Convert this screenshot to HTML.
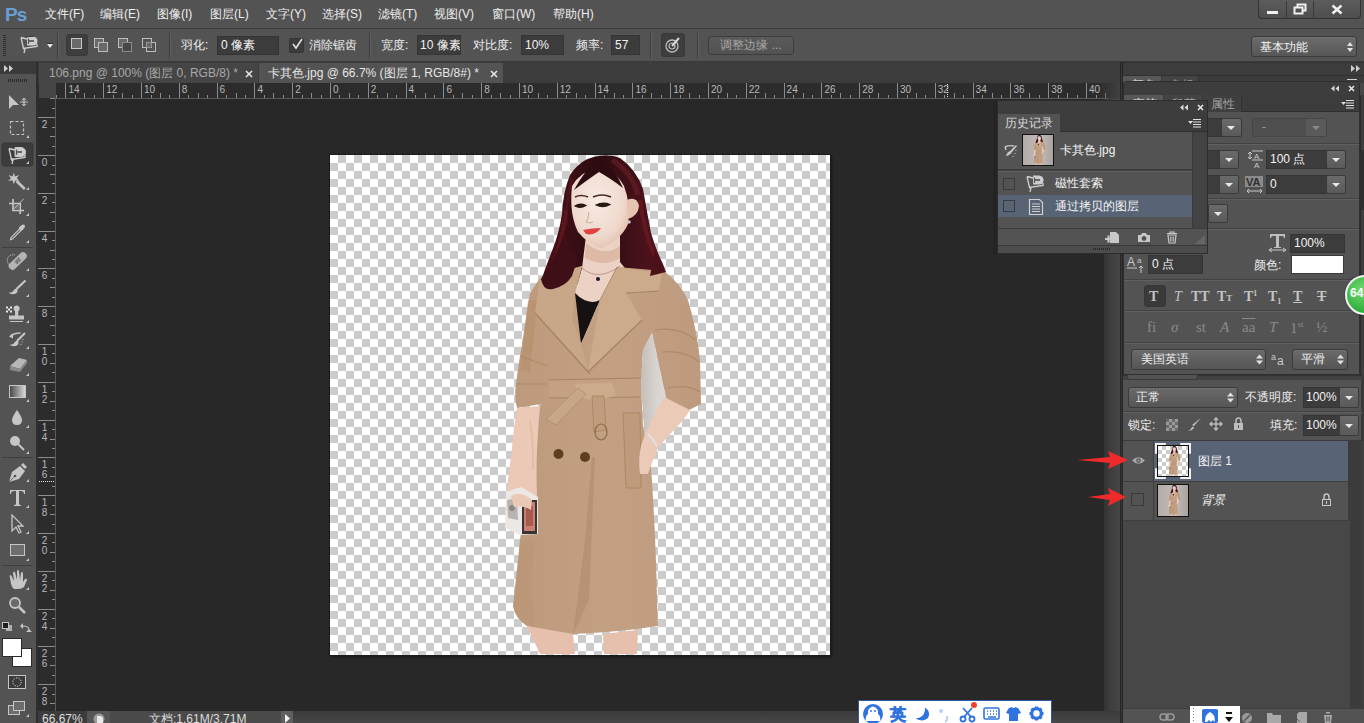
<!DOCTYPE html><html><head><meta charset="utf-8"><style>*{margin:0;padding:0;box-sizing:border-box}
html,body{width:1364px;height:723px;overflow:hidden;background:#282828;font-family:"Liberation Sans",sans-serif;color:#d8d8d8;font-size:12px;position:relative}
.a{position:absolute}
.mi{position:absolute;top:6px;font-size:12px;color:#eeeeee;white-space:nowrap}
.lbl{position:absolute;font-size:12px;color:#eeeeee;white-space:nowrap;line-height:16px}
.inp{position:absolute;background:#3c3c3c;border:1px solid #353535;color:#f2f2f2;font-size:12px;padding-left:3px;white-space:nowrap;overflow:hidden}
.vsep{position:absolute;width:2px;border-left:1px solid #3d3d3d;border-right:1px solid #606060}
.hsep{position:absolute;height:2px;border-top:1px solid #424242;border-bottom:1px solid #606060}
.tk{background:#8c8c8c}
.rl{font-size:10px;color:#b8b8b8;white-space:nowrap;line-height:11px}
.btn{position:absolute;background:linear-gradient(#6a6a6a,#5a5a5a);border:1px solid #3a3a3a;border-radius:2px}
.dd{position:absolute;background:linear-gradient(#6a6a6a,#555555);border:1px solid #3a3a3a;border-radius:3px;box-shadow:inset 0 1px 0 #707070}
.arr{position:absolute;width:0;height:0;border-left:4px solid transparent;border-right:4px solid transparent;border-top:4px solid #e8e8e8}
.checker{background:repeating-conic-gradient(#cccccc 0 25%,#ffffff 0 50%) 0 0/16px 16px}
.ic{position:absolute;overflow:visible}
</style></head><body>
<div class="a" style="left:0;top:0;width:1364px;height:28px;background:#535353">
  <div class="a" style="left:5px;top:4px;font-size:19px;font-weight:bold;color:#6a9fd6;letter-spacing:-1px">Ps</div>
  <div class="mi" style="left:45px">文件(F)</div>
  <div class="mi" style="left:100px">编辑(E)</div>
  <div class="mi" style="left:157px">图像(I)</div>
  <div class="mi" style="left:210px">图层(L)</div>
  <div class="mi" style="left:266px">文字(Y)</div>
  <div class="mi" style="left:322px">选择(S)</div>
  <div class="mi" style="left:378px">滤镜(T)</div>
  <div class="mi" style="left:434px">视图(V)</div>
  <div class="mi" style="left:492px">窗口(W)</div>
  <div class="mi" style="left:553px">帮助(H)</div>
  <div class="a" style="left:1258px;top:0;width:103px;height:19px;border:1px solid #333;border-top:none;border-radius:0 0 4px 4px;background:linear-gradient(#5c5c5c,#4e4e4e)"></div>
  <div class="a" style="left:1286px;top:1px;width:1px;height:17px;background:#3a3a3a"></div>
  <div class="a" style="left:1313px;top:1px;width:1px;height:17px;background:#3a3a3a"></div>
  <div class="a" style="left:1267px;top:11px;width:11px;height:3px;background:#f0f0f0"></div>
  <svg class="ic" style="left:1293px;top:3px" width="14" height="12"><rect x="4.5" y="1.5" width="8" height="6" fill="none" stroke="#f0f0f0" stroke-width="2"/><rect x="1.5" y="4.5" width="8" height="6" fill="#505050" stroke="#f0f0f0" stroke-width="2"/></svg>
  <svg class="ic" style="left:1331px;top:4px" width="12" height="11"><path d="M1.5 1.5L10.5 9.5M10.5 1.5L1.5 9.5" stroke="#f0f0f0" stroke-width="2.4"/></svg>
</div>
<div class="a" style="left:0;top:28px;width:1364px;height:1px;background:#3e3e3e"></div>

<div class="a" style="left:0;top:29px;width:1364px;height:33px;background:#535353">
  <div class="a" style="left:3px;top:6px;width:3px;height:21px;background:repeating-linear-gradient(#2e2e2e 0 1px,transparent 1px 2px)"></div>
  <svg class="ic" style="left:19px;top:6px" width="20" height="20" viewBox="19 35 20 20"><path d="M21 37.5 L27 39 M21 37.5 L23.5 48.5 L37 46.5 L37 44" fill="none" stroke="#cfcfcf" stroke-width="1.3"/><path d="M27 36.5 L33 36.5 Q37.5 37 37.5 41 Q37.5 45.5 33 45.5 L27 45.5 Z" fill="#cdcdcd"/><path d="M28 41 L34 41" stroke="#3a3a3a" stroke-width="1.4"/><path d="M28.5 38.5 L28.5 44" stroke="#555" stroke-width="1.2"/><path d="M26 37 L34 36" stroke="#2e2e2e" stroke-width="1"/><circle cx="24" cy="48.5" r="1" fill="#cfcfcf"/><path d="M25 49 L24 53" stroke="#cfcfcf" stroke-width="1.3"/></svg>
  <div class="a" style="left:47px;top:14px;width:6px;height:1px;background:#2e2e2e"></div><div class="arr" style="left:47px;top:15px;border-left-width:3px;border-right-width:3px;border-top-width:4px"></div>
  <div class="vsep" style="left:57px;top:4px;height:25px"></div>
  <div class="a" style="left:66px;top:5px;width:22px;height:22px;background:#3e3e3e;border-radius:3px;border:1px solid #393939"></div>
  <div class="a" style="left:71px;top:9px;width:11px;height:11px;border:1px solid #c8c8c8;background:#6a6a6a"></div>
  <svg class="ic" style="left:93px;top:8px" width="16" height="16"><rect x="1.5" y="1.5" width="9" height="9" fill="#6a6a6a" stroke="#bdbdbd"/><rect x="5.5" y="5.5" width="9" height="9" fill="#6a6a6a" stroke="#bdbdbd"/></svg>
  <svg class="ic" style="left:117px;top:8px" width="16" height="16"><rect x="1.5" y="1.5" width="9" height="9" fill="#6a6a6a" stroke="#bdbdbd"/><rect x="5.5" y="5.5" width="9" height="9" fill="#484848" stroke="#8a8a8a"/></svg>
  <svg class="ic" style="left:141px;top:8px" width="16" height="16"><rect x="1.5" y="1.5" width="9" height="9" fill="none" stroke="#bdbdbd"/><rect x="5.5" y="5.5" width="9" height="9" fill="none" stroke="#bdbdbd"/><rect x="5.5" y="5.5" width="5" height="5" fill="#6a6a6a"/></svg>
  <div class="vsep" style="left:169px;top:4px;height:25px"></div>
  <div class="lbl" style="left:181px;top:8px">羽化:</div>
  <div class="inp" style="left:217px;top:7px;width:62px;height:19px;line-height:17px">0 像素</div>
  <div class="a" style="left:289px;top:9px;width:15px;height:15px;background:#3c3c3c;border:1px solid #353535;border-radius:2px"></div>
  <svg class="ic" style="left:290px;top:8px" width="14" height="14"><path d="M3 7 L6 11 L12 2" fill="none" stroke="#e0e0e0" stroke-width="1.6"/></svg>
  <div class="lbl" style="left:309px;top:8px">消除锯齿</div>
  <div class="vsep" style="left:369px;top:4px;height:25px"></div>
  <div class="lbl" style="left:381px;top:8px">宽度:</div>
  <div class="inp" style="left:417px;top:6px;width:44px;height:20px;line-height:18px;padding-left:2px">10 像素</div>
  <div class="lbl" style="left:473px;top:8px">对比度:</div>
  <div class="inp" style="left:521px;top:6px;width:43px;height:20px;line-height:18px">10%</div>
  <div class="lbl" style="left:576px;top:8px">频率:</div>
  <div class="inp" style="left:611px;top:6px;width:29px;height:20px;line-height:18px">57</div>
  <div class="vsep" style="left:650px;top:4px;height:25px"></div>
  <div class="a" style="left:661px;top:4px;width:24px;height:24px;background:#3e3e3e;border-radius:3px;border:1px solid #393939"></div>
  <svg class="ic" style="left:664px;top:7px" width="18" height="18"><circle cx="8" cy="10" r="6" fill="none" stroke="#bdbdbd" stroke-width="1.3"/><circle cx="8" cy="10" r="3" fill="none" stroke="#bdbdbd" stroke-width="1.2"/><path d="M8 10 L15 2" stroke="#d8d8d8" stroke-width="2"/></svg>
  <div class="vsep" style="left:697px;top:4px;height:25px"></div>
  <div class="a" style="left:708px;top:7px;width:86px;height:19px;border:1px solid #3d3d3d;border-radius:3px;background:linear-gradient(#5a5a5a,#525252);color:#a6a6a6;font-size:12px;line-height:17px;text-align:center">调整边缘 ...</div>
  <div class="dd" style="left:1251px;top:7px;width:106px;height:21px;background:linear-gradient(#6c6c6c,#565656)"></div>
  <div class="lbl" style="left:1260px;top:10px;color:#f4f4f4">基本功能</div>
  <svg class="ic" style="left:1346px;top:12px" width="8" height="12"><path d="M1 5 L4 1 L7 5Z M1 7 L4 11 L7 7Z" fill="#e0e0e0"/></svg>
</div>
<div class="a" style="left:0;top:61px;width:1364px;height:1px;background:#3a3a3a"></div>

<div class="a" style="left:0;top:62px;width:36px;height:661px;background:#535353">
  <div class="a" style="left:0;top:0;width:36px;height:12px;background:#3a3a3a"></div>
  <svg class="ic" style="left:4px;top:3px" width="12" height="7"><path d="M0 0L4 3.5L0 7Z M5 0L9 3.5L5 7Z" fill="#cfcfcf"/></svg>
  <div class="a" style="left:8px;top:17px;width:19px;height:3px;background:repeating-linear-gradient(90deg,#2a2a2a 0 1px,transparent 1px 2px)"></div>
</div>
<div class="a" style="left:36px;top:62px;width:2px;height:661px;background:#2e2e2e"></div>
<svg class="a" style="left:0;top:62px" width="36" height="661" viewBox="0 62 36 661">
<rect x="2" y="143" width="31" height="23" rx="2" fill="#3c3c3c" stroke="#363636"/>
<g fill="#c6c6c6" stroke="none">
 <!-- corner triangles -->
 <path d="M26 138h3v-3z M26 164h3v-3z M26 190h3v-3z M26 216h3v-3z M26 243h3v-3z M26 271h3v-3z M26 297h3v-3z M26 323h3v-3z M26 349h3v-3z M26 376h3v-3z M26 402h3v-3z M26 428h3v-3z M26 454h3v-3z M26 482h3v-3z M26 508h3v-3z M26 534h3v-3z M26 561h3v-3z M26 590h3v-3z M26 717h3v-3z"/>
</g>
<g fill="#c6c6c6" stroke="#c6c6c6">
 <!-- move -->
 <path d="M9 95 L9 109 L13 105 L19 105 Z" stroke="none"/>
 <path d="M20 102 h8 M24 98 v8" stroke-width="1.2" fill="none"/>
 <path d="M22 100l2-2 2 2M22 104l2 2 2-2M18 102" fill="none" stroke-width="1"/>
 <!-- marquee -->
 <rect x="10.5" y="121.5" width="13" height="13" fill="none" stroke-dasharray="3 2" stroke-width="1.2"/>
 <!-- lasso -->
 <g transform="translate(-12 111)"><path d="M21 37.5 L27 39 M21 37.5 L23.5 48.5 L37 46.5 L37 44" fill="none" stroke="#cfcfcf" stroke-width="1.3"/><path d="M27 36.5 L33 36.5 Q37.5 37 37.5 41 Q37.5 45.5 33 45.5 L27 45.5 Z" fill="#cdcdcd"/><path d="M28 41 L34 41" stroke="#3a3a3a" stroke-width="1.4"/><path d="M28.5 38.5 L28.5 44" stroke="#555" stroke-width="1.2"/><circle cx="24" cy="48.5" r="1" fill="#cfcfcf"/><path d="M25 49 L24 53" stroke="#cfcfcf" stroke-width="1.3"/></g>
 <!-- wand -->
 <path d="M13.8 172.5 L15 176.5 L19 175 L16.8 178.2 L19.5 181 L15.5 180.2 L13.8 184 L12.4 180.2 L8.3 181 L11 178.2 L8.5 175 L12.6 176.5 Z" stroke="none"/>
 <path d="M16.5 181 L24.8 189" stroke-width="2.6" fill="none"/>
 <!-- crop -->
 <path d="M13 199 V210.5 H24 M9 203.5 H20.2 V214" fill="none" stroke-width="1.7"/>
 <rect x="14" y="204.5" width="5.5" height="5.5" fill="#6e6e6e" stroke="none"/>
 <path d="M14.4 208.6 L23.8 198.7" fill="none" stroke-width="0.9"/>
 <!-- eyedropper -->
 <path d="M10.5 239.6 L11 237.5 L19.5 229 L21 230.5 L12.5 239 Z" fill="none" stroke-width="1.1"/>
 <path d="M18.5 228 L21.5 231 L23 229.5 Q26 226.5 24.5 225 Q23 223.5 20 226.5 Z" stroke="none"/>
 <!-- separator -->
 <rect x="2" y="247" width="31" height="1" fill="#3e3e3e" stroke="none"/>
 <!-- healing -->
 <path d="M12.5 266 L23 256" stroke="#b4b4b4" stroke-width="7.5" stroke-linecap="round" fill="none"/>
 <path d="M15.5 263 L20 258.5" stroke="#8a8a8a" stroke-width="4" fill="none"/>
 <path d="M16 261h1M18 259h1M17 263h1M19 261h1" stroke="#555" stroke-width="1" fill="none"/>
 <path d="M10 266 Q6 262 8 257.5 Q10.5 254 15 255" fill="none" stroke="#d8d8d8" stroke-width="1" stroke-dasharray="1 1"/>
 <!-- brush -->
 <path d="M16.5 289 L25.5 280.5" stroke-width="2.2" fill="none"/>
 <path d="M8 292.5 Q12 293.5 14 290 Q15.5 288 17.5 289.5 Q18 292 16 293.5 Q12 295.5 8 292.5Z" stroke="none"/>
 <!-- stamp -->
 <circle cx="16.6" cy="308.5" r="3" stroke="none"/>
 <rect x="15" y="310" width="3.2" height="6" stroke="none"/>
 <rect x="9" y="315.5" width="15" height="4" stroke="none"/>
 <rect x="10" y="321" width="13" height="1" stroke="none"/>
 <path d="M6 306.5h2v2h-2zM10 306.5h2v2h-2zM8 308.5h2v2h-2zM6 310.5h2v2h-2zM10 310.5h2v2h-2z" stroke="none" fill="#e8e8e8"/>
 <!-- history brush -->
 <path d="M17 341 L25 333" stroke-width="2.2" fill="none"/>
 <path d="M9 344.5 Q13 345.5 15 342 Q16.5 340 18.5 341.5 Q19 344 17 345.5 Q13 347.5 9 344.5Z" stroke="none"/>
 <path d="M10.5 336 Q15 332.5 20.5 333" fill="none" stroke-width="1.6"/>
 <path d="M9 336.5 L13 333.5 L13 338.5 Z" stroke="none"/>
 <path d="M22.5 339.5h1M21.5 342h1M20.5 344.5h1" stroke-width="1" fill="none"/>
 <!-- eraser -->
 <path d="M10 366 L19 358 L27 360 L20 369 Z" stroke="none" fill="#b8b8b8"/>
 <path d="M10 366 L10 370 L20 372 L20 369 Z M20 369 L27 360 L27 363 L20 372Z" stroke="none" fill="#8a8a8a"/>
 <!-- gradient -->
 <defs><linearGradient id="gr" x1="0" x2="1"><stop offset="0" stop-color="#444"/><stop offset="1" stop-color="#ddd"/></linearGradient></defs>
 <rect x="9.5" y="385.5" width="16" height="12" fill="url(#gr)" stroke="#c6c6c6"/>
 <!-- blur drop -->
 <path d="M17 410 Q12 417 12 420 Q12 425 17 425 Q22 425 22 420 Q22 417 17 410Z" stroke="none"/>
 <!-- dodge -->
 <circle cx="15" cy="441" r="5" stroke="none"/>
 <path d="M18 444 L24 450" stroke-width="2" fill="none"/>
 <rect x="2" y="457" width="31" height="1" fill="#3e3e3e" stroke="none"/>
 <!-- pen -->
 <path d="M9 482 L12 472 L20 466 L25 471 L19 479 Z" stroke="none"/>
 <path d="M21 465 L23 463 L27 467 L25 469 Z" stroke="none"/>
 <circle cx="15" cy="476" r="1.3" fill="#535353" stroke="none"/>
 <path d="M9 482 L15 476" stroke="#535353" stroke-width="0.8"/>
 <!-- type -->
 <path d="M10 490 H25 V494 H24 Q24 491 21 491 H19 V504 Q19 505 21 505 V506 H14 V505 Q16 505 16 504 V491 H14 Q11 491 11 494 H10 Z" stroke="none"/>
 <!-- path selection -->
 <path d="M12 515 L12 531 L16 527 L19 533 L21 532 L18 526 L23 526 Z" fill="#535353" stroke-width="1.3"/>
 <!-- rect -->
 <rect x="10.5" y="544.5" width="14" height="11" fill="#6e6e6e" stroke="#c6c6c6"/>
 <rect x="2" y="565" width="31" height="1" fill="#3e3e3e" stroke="none"/>
 <!-- hand -->
 <path d="M10 578 Q9 575 11 575 L14 581 L13 573 Q13 571 15 572 L17 580 L17 571 Q18 569 19 571 L20 580 L21 573 Q22 571 23 573 L23 582 L25 579 Q27 578 27 580 L24 587 Q22 589 18 589 L14 589 Q12 588 11 584 Z" stroke="none"/>
 <!-- zoom -->
 <circle cx="15" cy="603" r="5" fill="#6a6a6a" stroke-width="1.8"/>
 <path d="M19 607 L25 613" stroke-width="2.5" fill="none"/>
 <!-- small swatches -->
 <rect x="6" y="625" width="6" height="6" fill="#b0b0b0" stroke="none"/>
 <rect x="2.5" y="622.5" width="6" height="6" fill="#1e1e1e" stroke="#c6c6c6"/>
 <path d="M20 626 L23 623 L23 629 Z M26 632 L29 629 L32 632 Z" stroke="none"/>
 <path d="M22.5 626 Q29 626 29 630" fill="none" stroke-width="1.1"/>
 <!-- colors -->
 <rect x="12.5" y="648.5" width="19" height="18" fill="#fff" stroke="#2a2a2a"/>
 <rect x="2.5" y="638.5" width="19" height="18" fill="#fff" stroke="#2a2a2a"/>
 <!-- quick mask -->
 <rect x="8.5" y="675.5" width="17" height="13" fill="#3a3a3a" stroke="#c6c6c6"/>
 <circle cx="17" cy="682" r="4.2" fill="none" stroke="#e0e0e0" stroke-dasharray="1.3 1.3"/>
 <!-- screen mode -->
 <rect x="8.5" y="705.5" width="11" height="9" fill="#6c6c6c" stroke="#c6c6c6"/>
 <rect x="13.5" y="701.5" width="11" height="9" fill="#6c6c6c" stroke="#c6c6c6"/>
</g>
</svg>

<div class="a" style="left:38px;top:62px;width:1082px;height:21px;background:#3c3c3c"></div>
<div class="a" style="left:39px;top:63px;width:219px;height:20px;background:#454545"></div>
<div class="lbl" style="left:49px;top:65px;color:#a8a8a8">106.png @ 100% (图层 0, RGB/8) *</div>
<svg class="ic" style="left:245px;top:70px" width="8" height="8"><path d="M1 1L7 7M7 1L1 7" stroke="#e8e8e8" stroke-width="1.5"/></svg>
<div class="a" style="left:259px;top:63px;width:244px;height:20px;background:#535353"></div>
<div class="lbl" style="left:268px;top:65px;color:#e6e6e6">卡其色.jpg @ 66.7% (图层 1, RGB/8#) *</div>
<svg class="ic" style="left:490px;top:70px" width="8" height="8"><path d="M1 1L7 7M7 1L1 7" stroke="#e8e8e8" stroke-width="1.5"/></svg>
<div class="a" style="left:56px;top:99px;width:1048px;height:612px;background:#282828"></div>
<div class="a" style="left:1104px;top:83px;width:16px;height:640px;background:linear-gradient(90deg,#333,#3e3e3e 40%,#454545)"></div>
<div class="a" style="left:1120px;top:62px;width:3px;height:661px;background:linear-gradient(90deg,#262626 0 1px,#383838 1px 2px,#262626 2px)"></div>
<div class="a checker" style="left:330px;top:155px;width:500px;height:500px;box-shadow:0 0 0 1px #1c1c1c,1px 1px 2px 1px rgba(0,0,0,.4)"></div>

<div class="a" style="left:1104px;top:711px;width:16px;height:12px;background:#585858"></div>
<svg class="a" style="left:330px;top:155px" width="500" height="500" viewBox="330 155 500 500">
<g id="figg"><defs>
 <linearGradient id="hairg" x1="0" y1="0" x2="1" y2="0"><stop offset="0" stop-color="#4a1018"/><stop offset="0.45" stop-color="#2c0c10"/><stop offset="1" stop-color="#561420"/></linearGradient>
 <linearGradient id="coatg" x1="0" y1="0" x2="1" y2="0"><stop offset="0" stop-color="#bd9a7c"/><stop offset="0.5" stop-color="#c3a083"/><stop offset="1" stop-color="#be9b7e"/></linearGradient>
 <radialGradient id="faceg" cx="0.45" cy="0.4" r="0.65"><stop offset="0" stop-color="#f8ebe4"/><stop offset="0.7" stop-color="#efd9cd"/><stop offset="1" stop-color="#e2c0ae"/></radialGradient>
</defs>
<!-- hair back -->
<path d="M599 156 Q581 158 570 175 Q563 192 562 214 Q559 234 552 251 Q546 266 542 278 Q541 288 548 290 L590 282 L640 272 L666 276 Q666 272 663 264 Q656 250 651 233 Q647 212 643 189 Q636 169 620 158 Q610 154 599 156Z" fill="url(#hairg)"/>
<path d="M566 210 Q562 245 548 276" fill="none" stroke="#6a1822" stroke-width="4" opacity="0.7"/>
<path d="M612 160 Q632 172 638 195" fill="none" stroke="#6e2028" stroke-width="5" opacity="0.55"/>
<path d="M572 178 Q566 200 566 225" fill="none" stroke="#5a1620" stroke-width="3" opacity="0.6"/>
<path d="M640 200 Q645 240 660 266" fill="none" stroke="#6e1a24" stroke-width="4" opacity="0.7"/>
<!-- gray shadow behind right arm -->

<!-- neck/chest -->
<path d="M586 236 L620 234 L620 262 L628 272 L600 302 L588 304 L575 293 L582 268 Z" fill="#ecd2c4"/>
<path d="M586 243 Q604 258 620 246 L620 258 Q604 268 585 258Z" fill="#ddb9a6"/>
<!-- black top -->
<path d="M575 293 Q588 306 600 300 L581 344 L572 320 Z" fill="#161212"/>
<!-- coat main body + arms -->
<path d="M540 278 L582 266 L575 293 L581 344 L600 300 L617 267 L664 271 Q680 283 688 300 Q697 330 700 360 L701 404 L687 411 L666 398 L652 333 L643 350 L641 384 L643 426 L651 466 Q656 540 657 600 L658 626 Q620 632 573 634 L570 636 Q545 632 527 626 Q515 618 513 606 Q518 560 520 540 Q528 480 536 440 L539 409 L541 404 L517 408 Q514 396 516 384 Q519 360 522 345 Q527 310 530 293 Z" fill="url(#coatg)"/>
<!-- gray shadow -->
<defs><linearGradient id="grayg" x1="0" y1="0" x2="1" y2="0"><stop offset="0" stop-color="#c4beb8"/><stop offset="0.5" stop-color="#d8d4d0"/><stop offset="1" stop-color="#e2dfdc"/></linearGradient></defs>
<path d="M652 333 L666 398 L672 432 L645 442 L641 384 L643 350 Z" fill="url(#grayg)"/>
<!-- shading on coat -->
<path d="M585 540 L592 457 L595 457 L589 600 L573 634 Z" fill="#a88664" opacity="0.45"/>
<path d="M520 540 Q518 580 513 606 Q515 618 527 626 L535 628 Q530 590 534 540 Z" fill="#b99370" opacity="0.4"/>
<path d="M528 300 Q524 340 520 370 L530 372 Q534 330 538 300Z" fill="#b48e69" opacity="0.5"/>
<!-- left lapel -->
<path d="M582 266 L540 278 L535 313 L588 371 L581 344 L572 320 L575 293 Z" fill="#c8a688"/>
<path d="M535 313 L590 374" fill="none" stroke="#a8835f" stroke-width="1.3"/>
<!-- right lapel -->
<path d="M617 267 L662 273 L659 291 L626 293 L642 320 L588 371 L600 300 Z" fill="#ccaa8c"/>
<path d="M642 320 L588 372 M626 293 L659 291" fill="none" stroke="#a8835f" stroke-width="1.2"/>
<path d="M617 267 L600 300" fill="none" stroke="#b89068" stroke-width="1"/>
<path d="M563 236 Q556 258 541 279 Q543 291 553 289 Q566 286 572 276 L578 258 Z" fill="#3e0f16"/>
<path d="M655 250 Q660 262 666 272 L650 276 Z" fill="#4a1218"/>
<!-- right arm folds -->
<path d="M655 330 Q680 326 695 340 M662 352 Q685 350 699 362 M668 388 Q688 384 700 392" fill="none" stroke="#a8835e" stroke-width="1.2" opacity="0.7"/>
<path d="M520 356 L547 366 M517 384 L547 384" fill="none" stroke="#a8835e" stroke-width="1.2" opacity="0.7"/>
<!-- belt -->
<path d="M549 380 L641 378 L641 397 L549 398 Z" fill="#c4a184"/>
<path d="M549 380 L641 378 M549 398 L641 397" stroke="#a8835e" stroke-width="1"/>
<path d="M575 384 L612 383 L616 396 L598 400 L578 398 Z" fill="#ccaa8c"/>
<path d="M586 394 L556 425 L546 419 L578 388 Z" fill="#c8a688" stroke="#a8835e" stroke-width="0.6"/>
<path d="M592 396 L604 396 L606 430 L594 432 Z" fill="#bf9c7e" stroke="#a8835e" stroke-width="0.8"/>
<ellipse cx="601" cy="432" rx="6" ry="8" fill="none" stroke="#8a6a4a" stroke-width="1.2"/>
<!-- pocket flap -->
<path d="M623 413 L640 413 L641 488 L626 488 Z" fill="#be9b7d" stroke="#a8835e" stroke-width="0.8"/>
<!-- buttons -->
<circle cx="558.5" cy="454" r="5" fill="#5e3e22"/>
<circle cx="585" cy="457" r="5" fill="#5e3e22"/>
<!-- left forearm & hand -->
<path d="M517 408 L540 406 Q538 430 537 450 Q536 475 537 495 Q535 508 530 514 L517 516 Q508 505 507 488 Q510 465 512 448 Q514 425 517 408 Z" fill="#ecc9b6"/>
<path d="M530 420 Q534 450 533 470" stroke="#dcb4a0" stroke-width="2" fill="none" opacity="0.6"/>
<!-- camera -->
<path d="M506 492 L521 487 L538 497 L538 534 L520 535 L505 528 Z" fill="#ebe8e6"/>
<path d="M507 500 L517 498 L518 520 L508 518 Z" fill="#b8b4b2"/>
<circle cx="512" cy="508" r="3" fill="#8a8684"/>
<rect x="522" y="500" width="15" height="34" fill="#3a3434"/>
<rect x="524" y="502" width="11" height="29" fill="#c88070"/>
<path d="M526 506 Q530 503 533 507 L533 526 L526 526Z" fill="#a85a50"/>
<path d="M511 496 Q520 490 532 500 L531 510 Q524 505 514 507 Z" fill="#ecc9b6"/>
<!-- right forearm -->
<path d="M664 397 L690 410 Q684 420 676 428 Q664 440 657 450 Q652 462 648 474 L640 474 Q638 458 641 446 Q646 430 654 416 Q660 404 664 397 Z" fill="#eccab8"/>
<path d="M648 434 Q654 440 657 446" stroke="#e0e0e4" stroke-width="2.4" fill="none"/>
<!-- legs -->
<path d="M527 626 L573 634 L575 654 L540 654 Z" fill="#e6c0ac"/>
<path d="M603 634 L638 630 L637 654 L604 654 Z" fill="#e6c0ac"/>
<!-- face -->
<path d="M572 186 Q580 172 598 167 Q616 171 624 186 Q631 204 628 224 Q621 240 601 248 Q588 244 578 232 Q569 214 572 186Z" fill="url(#faceg)"/>
<path d="M598 158 Q585 170 574 190 Q590 178 599 172 Q610 178 623 188 Q615 168 598 158Z" fill="#2c0c10"/>
<path d="M627 200 Q637 196 639 206 Q638 216 628 219 Z" fill="#e6c4b2"/>
<path d="M575 197 Q581 194 588 197 M593 197 Q602 193 611 197" stroke="#4a2a22" stroke-width="1.6" fill="none"/>
<path d="M575 206 Q580 202.5 586 205.5 Q580 209 575 206Z M596 205 Q603 201.5 610 204.5 Q603 208.5 596 205Z" stroke="#2a1810" stroke-width="1.2" fill="#2a1810"/>
<path d="M583 230 Q592 228 601 228 Q595 236 586 234 Z" fill="#e2413f"/>
<path d="M589 212 Q588 220 586 222 Q590 224 593 222" fill="none" stroke="#d0a898" stroke-width="1"/>
<circle cx="629" cy="222" r="1.8" fill="#c8c8d0"/>
<circle cx="598" cy="279" r="2" fill="#1a1a30"/>
<path d="M582 268 Q598 282 620 266" fill="none" stroke="#a07070" stroke-width="0.6"/>
</g></svg>

<div class="a" style="left:1123px;top:62px;width:241px;height:661px;background:#474747"></div>
<div class="a" style="left:1123px;top:62px;width:241px;height:13px;background:#3c3c3c;border-top:1px solid #333"></div>
<svg class="ic" style="left:1351px;top:65px" width="10" height="7"><path d="M0 0L4 3.5L0 7Z M5 0L9 3.5L5 7Z" fill="#d0d0d0"/></svg>
<div class="a" style="left:1123px;top:75px;width:241px;height:8px;background:#3c3c3c"></div>
<div class="a" style="left:1123px;top:75px;width:241px;height:1px;background:#303030"></div>
<div class="a" style="left:1123px;top:76px;width:38px;height:7px;background:#585858;overflow:hidden"><div class="lbl" style="left:9px;top:1px;color:#e0e0e0">颜色</div></div>
<div class="a" style="left:1162px;top:76px;width:37px;height:7px;background:#444;overflow:hidden;border-right:1px solid #333"><div class="lbl" style="left:8px;top:1px;color:#a8a8a8">色板</div></div>
<div class="a" style="left:1347px;top:79px;width:10px;height:1px;background:#d0d0d0"></div>
<!-- character panel -->
<div class="a" style="left:1123px;top:81px;width:237px;height:294px;background:#535353;border:1px solid #2e2e2e;border-radius:3px 3px 0 0;overflow:hidden">
  <div class="a" style="left:0;top:0;width:236px;height:13px;background:#3d3d3d"></div>
  <svg class="ic" style="left:207px;top:3px" width="8" height="7"><path d="M3.5 0.5L0 3.5L3.5 6.5Z M8 0.5L4.5 3.5L8 6.5Z" fill="#d8d8d8"/></svg>
  <svg class="ic" style="left:224px;top:3px" width="7" height="7"><path d="M1 1L6 6M6 1L1 6" stroke="#e8e8e8" stroke-width="1.5"/></svg>
  <div class="a" style="left:0;top:13px;width:236px;height:17px;background:#3c3c3c;border-bottom:1px solid #2e2e2e"></div>
  <div class="a" style="left:0;top:13px;width:39px;height:17px;background:#585858"></div>
  <div class="a" style="left:40px;top:13px;width:38px;height:17px;background:#444"></div>
  <div class="a" style="left:79px;top:13px;width:39px;height:17px;background:#3f3f3f;border-right:1px solid #333"></div>
  <div class="lbl" style="left:9px;top:14px;color:#e6e6e6">字符</div>
  <div class="lbl" style="left:48px;top:14px;color:#a8a8a8">段落</div>
  <div class="lbl" style="left:87px;top:14px;color:#a2a2a2">属性</div>
  <svg class="ic" style="left:217px;top:17px" width="14" height="10"><path d="M0 3h5l-2.5 3z" fill="#e0e0e0"/><path d="M5 1.5h8M5 4h8M5 6.5h8M5 9h8" stroke="#e0e0e0" stroke-width="1"/></svg>
</div>
<div class="a" style="left:1124px;top:112px;width:235px;height:263px">
  <!-- row1 -->
  <div class="inp" style="left:50px;top:6px;width:48px;height:19px"></div>
  <div class="btn" style="left:97px;top:6px;width:21px;height:19px"></div><div class="arr" style="left:103px;top:14px"></div>
  <div class="a" style="left:128px;top:6px;width:75px;height:19px;background:#4e4e4e;border:1px solid #464646;border-radius:2px"></div>
  <div class="a" style="left:182px;top:7px;width:20px;height:17px;background:#5a5a5a"></div>
  <div class="a" style="left:138px;top:15px;width:4px;height:1px;background:#8a8a8a"></div>
  <div class="arr" style="left:188px;top:14px;border-top-color:#8a8a8a"></div>
  <div class="hsep" style="left:0;top:31px;width:235px"></div>
  <!-- row2 -->
  <div class="inp" style="left:50px;top:38px;width:46px;height:19px"></div>
  <div class="btn" style="left:95px;top:38px;width:20px;height:19px"></div><div class="arr" style="left:101px;top:46px"></div>
  <svg class="ic" style="left:122px;top:38px" width="18" height="20"><path d="M2 4l2-2 2 2M2 7l2 2 2-2M4 2v7" stroke="#c8c8c8" fill="none"/><path d="M6 1h11M6 10h11" stroke="#c8c8c8"/><text x="8" y="9" font-size="8" fill="#c8c8c8" font-family="Liberation Sans">A</text><text x="8" y="18" font-size="8" fill="#c8c8c8" font-family="Liberation Sans">A</text></svg>
  <div class="inp" style="left:142px;top:38px;width:62px;height:19px;line-height:17px;padding-left:3px">100 点</div>
  <div class="btn" style="left:202px;top:38px;width:20px;height:19px"></div><div class="arr" style="left:208px;top:46px"></div>
  <!-- row3 -->
  <div class="inp" style="left:50px;top:63px;width:46px;height:19px"></div>
  <div class="btn" style="left:95px;top:63px;width:20px;height:19px"></div><div class="arr" style="left:101px;top:71px"></div>
  <svg class="ic" style="left:121px;top:63px" width="19" height="20"><rect x="0" y="1" width="18" height="11" fill="#8a8a8a"/><text x="1" y="11" font-size="11" font-weight="bold" fill="#2e2e2e" font-family="Liberation Sans">VA</text><path d="M2 16h15M2 16l2-2M2 16l2 2M17 16l-2-2M17 16l-2 2" stroke="#c8c8c8" fill="none"/></svg>
  <div class="inp" style="left:142px;top:63px;width:62px;height:19px;line-height:17px;padding-left:3px">0</div>
  <div class="btn" style="left:202px;top:63px;width:20px;height:19px"></div><div class="arr" style="left:208px;top:71px"></div>
  <div class="hsep" style="left:0;top:86px;width:235px"></div>
  <!-- row4 -->
  <div class="btn" style="left:84px;top:92px;width:20px;height:19px"></div><div class="arr" style="left:90px;top:100px"></div>
  <div class="hsep" style="left:0;top:116px;width:235px"></div>
  <!-- row5 -->
  <svg class="ic" style="left:143px;top:120px" width="22" height="20"><path d="M3 2h15v4h-1q0-2-2-2h-3v11h2v1H7v-1h2V4H6q-2 0-2 2H3z" fill="#bdbdbd"/><path d="M2 18h17M2 18l3-2M2 18l3 2M19 18l-3-2M19 18l-3 2" stroke="#c8c8c8" fill="none"/></svg>
  <div class="inp" style="left:166px;top:122px;width:55px;height:19px;line-height:17px;padding-left:3px">100%</div>
  <!-- row6 -->
  <svg class="ic" style="left:3px;top:143px" width="20" height="20"><text x="0" y="11" font-size="12" fill="#c8c8c8" font-family="Liberation Sans">A</text><text x="10" y="8" font-size="8" fill="#c8c8c8" font-family="Liberation Sans">a</text><path d="M0 13h10M14 11v7M12 13l2-2 2 2" stroke="#c8c8c8" fill="none"/></svg>
  <div class="inp" style="left:24px;top:143px;width:55px;height:19px;line-height:17px;padding-left:3px">0 点</div>
  <div class="lbl" style="left:130px;top:145px">颜色:</div>
  <div class="a" style="left:167px;top:143px;width:53px;height:19px;background:#fff;border:1px solid #3a3a3a"></div>
  <div class="hsep" style="left:0;top:167px;width:235px"></div>
  <!-- row7 -->
  <div class="a" style="left:20px;top:173px;width:22px;height:22px;background:#3a3a3a;border:1px solid #363636;border-radius:3px"></div>
</div>
<div class="hsep" style="left:1124px;top:310px;width:235px"></div>
<div class="a" style="left:1124px;top:286px;width:235px;height:20px;font-family:'Liberation Serif',serif;font-weight:bold;font-size:14px;color:#c4c4c4">
  <div class="a" style="left:25px;top:3px">T</div>
  <div class="a" style="left:50px;top:3px;font-style:italic;font-weight:normal">T</div>
  <div class="a" style="left:67px;top:3px">TT</div>
  <div class="a" style="left:93px;top:3px">T<span style="font-size:9px">T</span></div>
  <div class="a" style="left:120px;top:3px">T<span style="font-size:8px;vertical-align:5px">1</span></div>
  <div class="a" style="left:144px;top:3px">T<span style="font-size:8px;vertical-align:-3px">1</span></div>
  <div class="a" style="left:169px;top:3px;text-decoration:underline">T</div>
  <div class="a" style="left:193px;top:3px;text-decoration:line-through">T</div>
</div>
<div class="a" style="left:1124px;top:317px;width:235px;height:20px;font-family:'Liberation Serif',serif;font-size:15px;color:#8a8a8a">
  <div class="a" style="left:23px;top:2px">fi</div>
  <div class="a" style="left:47px;top:2px;font-style:italic">σ</div>
  <div class="a" style="left:72px;top:2px">st</div>
  <div class="a" style="left:96px;top:2px;font-style:italic">A</div>
  <div class="a" style="left:118px;top:2px;text-decoration:overline">aa</div>
  <div class="a" style="left:145px;top:2px;font-style:italic">T</div>
  <div class="a" style="left:166px;top:2px">1<span style="font-size:9px;vertical-align:6px">st</span></div>
  <div class="a" style="left:192px;top:2px">½</div>
</div>
<div class="a" style="left:1124px;top:343px;width:235px;height:32px">
  <div class="hsep" style="left:0;top:-1px;width:235px"></div>
  <div class="dd" style="left:7px;top:6px;width:135px;height:21px"></div>
  <div class="lbl" style="left:17px;top:8px">美国英语</div>
  <svg class="ic" style="left:132px;top:11px" width="7" height="11"><path d="M0 4.5L3.5 0.5L7 4.5Z M0 6.5L3.5 10.5L7 6.5Z" fill="#e0e0e0"/></svg>
  <svg class="ic" style="left:147px;top:8px" width="16" height="16"><text x="0" y="9" font-size="9" fill="#c8c8c8" font-family="Liberation Sans">a</text><text x="6" y="14" font-size="12" fill="#c8c8c8" font-family="Liberation Sans">a</text></svg>
  <div class="dd" style="left:168px;top:6px;width:56px;height:21px"></div>
  <div class="lbl" style="left:177px;top:8px">平滑</div>
  <svg class="ic" style="left:213px;top:11px" width="7" height="11"><path d="M0 4.5L3.5 0.5L7 4.5Z M0 6.5L3.5 10.5L7 6.5Z" fill="#e0e0e0"/></svg>
</div>
<!-- layers panel (behind) -->
<div class="a" style="left:1123px;top:375px;width:241px;height:8px;background:#424242;border-top:1px solid #333"></div>
<div class="a" style="left:1127px;top:375px;width:71px;height:5px;background:#535353;border:1px solid #3a3a3a;border-top:none;border-radius:0 0 3px 3px"></div>
<div class="a" style="left:1123px;top:380px;width:239px;height:329px;background:#535353;border-right:1px solid #3a3a3a"></div>
<div class="a" style="left:1348px;top:441px;width:16px;height:267px;background:linear-gradient(90deg,#3b3b3b 70%,#424242)"></div><div class="a" style="left:1362px;top:375px;width:2px;height:66px;background:#3a3a3a"></div>
<div class="dd" style="left:1128px;top:387px;width:110px;height:21px"></div>
<div class="lbl" style="left:1136px;top:389px">正常</div>
<svg class="ic" style="left:1227px;top:392px" width="7" height="11"><path d="M0 4.5L3.5 0.5L7 4.5Z M0 6.5L3.5 10.5L7 6.5Z" fill="#e0e0e0"/></svg>
<div class="lbl" style="left:1245px;top:389px">不透明度:</div>
<div class="inp" style="left:1303px;top:387px;width:37px;height:21px;line-height:19px;padding-left:2px">100%</div>
<div class="btn" style="left:1339px;top:387px;width:20px;height:21px"></div><div class="arr" style="left:1345px;top:396px"></div>
<div class="hsep" style="left:1123px;top:411px;width:239px"></div>
<div class="lbl" style="left:1128px;top:417px">锁定:</div>
<svg class="ic" style="left:1166px;top:419px" width="12" height="12"><rect x="0" y="0" width="12" height="12" fill="#9a9a9a"/><path d="M0 0h3v3H0zM6 0h3v3H6zM3 3h3v3H3zM9 3h3v3H9zM0 6h3v3H0zM6 6h3v3H6zM3 9h3v3H3zM9 9h3v3H9z" fill="#6a6a6a"/></svg>
<svg class="ic" style="left:1186px;top:417px" width="16" height="15"><path d="M15 1L8 9L6 8Z" fill="#bdbdbd"/><path d="M1 14Q4 14 6 10Q8 9 8 11Q6 14 1 14Z" fill="#bdbdbd"/></svg>
<svg class="ic" style="left:1209px;top:417px" width="14" height="14"><path d="M7 1v12M1 7h12M5 3l2-2 2 2M5 11l2 2 2-2M3 5L1 7l2 2M11 5l2 2-2 2" stroke="#bdbdbd" stroke-width="1.3" fill="none"/></svg>
<svg class="ic" style="left:1233px;top:417px" width="11" height="14"><path d="M3 6V4Q3 1 5.5 1Q8 1 8 4V6" stroke="#bdbdbd" stroke-width="1.5" fill="none"/><rect x="1" y="6" width="9" height="7" fill="#bdbdbd"/><rect x="5" y="8" width="1" height="3" fill="#535353"/></svg>
<div class="lbl" style="left:1270px;top:417px">填充:</div>
<div class="inp" style="left:1303px;top:415px;width:37px;height:21px;line-height:19px;padding-left:2px">100%</div>
<div class="btn" style="left:1339px;top:415px;width:20px;height:21px"></div><div class="arr" style="left:1345px;top:424px"></div>
<div class="a" style="left:1123px;top:440px;width:239px;height:1px;background:#3c3c3c"></div>
<!-- layer 1 -->
<div class="a" style="left:1123px;top:441px;width:31px;height:40px;background:#535353;border-right:1px solid #3e3e3e"></div>
<div class="a" style="left:1154px;top:441px;width:194px;height:40px;background:#586475"></div>
<svg class="ic" style="left:1131px;top:456px" width="15" height="9"><path d="M1 4.5Q7.5 -2 14 4.5Q7.5 11 1 4.5Z" fill="#a8a8a8"/><circle cx="7.5" cy="4.5" r="2.2" fill="#535353"/><circle cx="7.5" cy="4.5" r="1" fill="#a8a8a8"/></svg>
<div class="a" style="left:1155px;top:443px;width:36px;height:36px;border:2px solid #f0f0f0;clip-path:polygon(0 0,30% 0,30% 8%,70% 8%,70% 0,100% 0,100% 30%,92% 30%,92% 70%,100% 70%,100% 100%,70% 100%,70% 92%,30% 92%,30% 100%,0 100%,0 70%,8% 70%,8% 30%,0 30%)"></div>
<div class="a" style="left:1157px;top:445px;width:32px;height:32px;background:#111;padding:1px"><div class="checker" style="width:30px;height:30px;background-size:8px 8px"></div></div>
<svg class="ic" style="left:1158px;top:446px" width="30" height="30" viewBox="330 155 500 500"><use href="#figg"/></svg>
<div class="lbl" style="left:1198px;top:453px;color:#f4f4f4">图层 1</div>
<div class="a" style="left:1123px;top:481px;width:227px;height:1px;background:#3e3e3e"></div>
<!-- background layer -->
<div class="a" style="left:1154px;top:482px;width:194px;height:38px;background:#535353"></div>
<div class="a" style="left:1123px;top:482px;width:31px;height:38px;background:#535353;border-right:1px solid #3e3e3e"></div>
<div class="a" style="left:1131px;top:493px;width:13px;height:13px;border:1px solid #3a3a3a"></div>
<div class="a" style="left:1157px;top:484px;width:32px;height:33px;background:linear-gradient(90deg,#b4aca8,#c2bab6 60%,#aaa29e);border:1px solid #111;overflow:hidden">
  <svg width="30" height="31" viewBox="330 155 500 500" preserveAspectRatio="none"><use href="#figg"/></svg>
</div>
<div class="lbl" style="left:1201px;top:492px;font-style:italic;color:#f4f4f4;font-size:12px">背景</div>
<svg class="ic" style="left:1321px;top:493px" width="11" height="14"><path d="M3 6V4Q3 1 5.5 1Q8 1 8 4V6" stroke="#c8c8c8" stroke-width="1.4" fill="none"/><rect x="1.5" y="6.5" width="8" height="6" fill="none" stroke="#c8c8c8"/><rect x="5" y="8" width="1" height="3" fill="#c8c8c8"/></svg>
<div class="a" style="left:1123px;top:520px;width:227px;height:1px;background:#3e3e3e"></div>
<div class="a" style="left:1123px;top:521px;width:227px;height:188px;background:#474747"></div>
<!-- layers footer -->
<div class="a" style="left:1123px;top:708px;width:241px;height:15px;background:#535353;border-top:1px solid #3c3c3c"></div>
<svg class="ic" style="left:1159px;top:713px" width="16" height="8"><rect x="1" y="1" width="8" height="6" rx="3" fill="none" stroke="#9a9a9a" stroke-width="1.5"/><rect x="7" y="1" width="8" height="6" rx="3" fill="none" stroke="#9a9a9a" stroke-width="1.5"/></svg>
<svg class="ic" style="left:1241px;top:712px" width="12" height="11"><circle cx="6" cy="6" r="5" fill="#9a9a9a"/><path d="M3 9L9 3" stroke="#535353" stroke-width="1.5"/></svg>
<svg class="ic" style="left:1267px;top:712px" width="14" height="11"><path d="M0 1h5l1 2h8v8H0z" fill="#a8a8a8"/></svg>
<svg class="ic" style="left:1296px;top:711px" width="12" height="12"><path d="M3 1h8v11H1V3z" fill="#a8a8a8"/><path d="M1 8l3 3" stroke="#535353"/></svg>
<svg class="ic" style="left:1322px;top:711px" width="12" height="12"><path d="M1 2.5h10M4 2.5V1h4v1.5M2 4h8l-1 8H3z" fill="#a8a8a8"/><path d="M4.5 5.5v5M6 5.5v5M7.5 5.5v5" stroke="#535353" stroke-width="0.8"/></svg>
<div class="a" style="left:1360px;top:95px;width:4px;height:280px;background:#3e3e3e;border-left:1px solid #2c2c2c"></div>
<div class="a" style="left:1361px;top:150px;width:3px;height:60px;background:#2e2e2e"></div>
<!-- green circle -->
<div class="a" style="left:1345px;top:275px;width:40px;height:40px;border-radius:50%;background:radial-gradient(circle at 40% 35%,#6fd86f,#2fae3a 70%);border:2px solid #f4f4f4;box-shadow:0 0 2px rgba(0,0,0,.5)"></div>
<div class="a" style="left:1350px;top:286px;font-size:12px;font-weight:bold;color:#fff">64</div>

<div class="a" style="left:38px;top:83px;width:1082px;height:15px;background:#2c2c2c;overflow:hidden"><div class="a" style="left:1px;top:0;width:17px;height:15px;background:#464646"></div><div class="a tk" style="left:18.0px;top:12px;width:1px;height:3px"></div><div class="a tk" style="left:27.4px;top:0;width:1px;height:15px"></div><div class="a rl" style="left:30.4px;top:1px">14</div><div class="a tk" style="left:36.9px;top:12px;width:1px;height:3px"></div><div class="a tk" style="left:46.3px;top:10px;width:1px;height:5px"></div><div class="a tk" style="left:55.8px;top:12px;width:1px;height:3px"></div><div class="a tk" style="left:65.2px;top:0;width:1px;height:15px"></div><div class="a rl" style="left:68.2px;top:1px">12</div><div class="a tk" style="left:74.7px;top:12px;width:1px;height:3px"></div><div class="a tk" style="left:84.1px;top:10px;width:1px;height:5px"></div><div class="a tk" style="left:93.6px;top:12px;width:1px;height:3px"></div><div class="a tk" style="left:103.0px;top:0;width:1px;height:15px"></div><div class="a rl" style="left:106.0px;top:1px">10</div><div class="a tk" style="left:112.5px;top:12px;width:1px;height:3px"></div><div class="a tk" style="left:121.9px;top:10px;width:1px;height:5px"></div><div class="a tk" style="left:131.3px;top:12px;width:1px;height:3px"></div><div class="a tk" style="left:140.8px;top:0;width:1px;height:15px"></div><div class="a rl" style="left:143.8px;top:1px">8</div><div class="a tk" style="left:150.2px;top:12px;width:1px;height:3px"></div><div class="a tk" style="left:159.7px;top:10px;width:1px;height:5px"></div><div class="a tk" style="left:169.2px;top:12px;width:1px;height:3px"></div><div class="a tk" style="left:178.6px;top:0;width:1px;height:15px"></div><div class="a rl" style="left:181.6px;top:1px">6</div><div class="a tk" style="left:188.1px;top:12px;width:1px;height:3px"></div><div class="a tk" style="left:197.5px;top:10px;width:1px;height:5px"></div><div class="a tk" style="left:207.0px;top:12px;width:1px;height:3px"></div><div class="a tk" style="left:216.4px;top:0;width:1px;height:15px"></div><div class="a rl" style="left:219.4px;top:1px">4</div><div class="a tk" style="left:225.8px;top:12px;width:1px;height:3px"></div><div class="a tk" style="left:235.3px;top:10px;width:1px;height:5px"></div><div class="a tk" style="left:244.8px;top:12px;width:1px;height:3px"></div><div class="a tk" style="left:254.2px;top:0;width:1px;height:15px"></div><div class="a rl" style="left:257.2px;top:1px">2</div><div class="a tk" style="left:263.6px;top:12px;width:1px;height:3px"></div><div class="a tk" style="left:273.1px;top:10px;width:1px;height:5px"></div><div class="a tk" style="left:282.6px;top:12px;width:1px;height:3px"></div><div class="a tk" style="left:292.0px;top:0;width:1px;height:15px"></div><div class="a rl" style="left:295.0px;top:1px">0</div><div class="a tk" style="left:301.4px;top:12px;width:1px;height:3px"></div><div class="a tk" style="left:310.9px;top:10px;width:1px;height:5px"></div><div class="a tk" style="left:320.4px;top:12px;width:1px;height:3px"></div><div class="a tk" style="left:329.8px;top:0;width:1px;height:15px"></div><div class="a rl" style="left:332.8px;top:1px">2</div><div class="a tk" style="left:339.2px;top:12px;width:1px;height:3px"></div><div class="a tk" style="left:348.7px;top:10px;width:1px;height:5px"></div><div class="a tk" style="left:358.2px;top:12px;width:1px;height:3px"></div><div class="a tk" style="left:367.6px;top:0;width:1px;height:15px"></div><div class="a rl" style="left:370.6px;top:1px">4</div><div class="a tk" style="left:377.1px;top:12px;width:1px;height:3px"></div><div class="a tk" style="left:386.5px;top:10px;width:1px;height:5px"></div><div class="a tk" style="left:396.0px;top:12px;width:1px;height:3px"></div><div class="a tk" style="left:405.4px;top:0;width:1px;height:15px"></div><div class="a rl" style="left:408.4px;top:1px">6</div><div class="a tk" style="left:414.8px;top:12px;width:1px;height:3px"></div><div class="a tk" style="left:424.3px;top:10px;width:1px;height:5px"></div><div class="a tk" style="left:433.8px;top:12px;width:1px;height:3px"></div><div class="a tk" style="left:443.2px;top:0;width:1px;height:15px"></div><div class="a rl" style="left:446.2px;top:1px">8</div><div class="a tk" style="left:452.6px;top:12px;width:1px;height:3px"></div><div class="a tk" style="left:462.1px;top:10px;width:1px;height:5px"></div><div class="a tk" style="left:471.6px;top:12px;width:1px;height:3px"></div><div class="a tk" style="left:481.0px;top:0;width:1px;height:15px"></div><div class="a rl" style="left:484.0px;top:1px">10</div><div class="a tk" style="left:490.4px;top:12px;width:1px;height:3px"></div><div class="a tk" style="left:499.9px;top:10px;width:1px;height:5px"></div><div class="a tk" style="left:509.4px;top:12px;width:1px;height:3px"></div><div class="a tk" style="left:518.8px;top:0;width:1px;height:15px"></div><div class="a rl" style="left:521.8px;top:1px">12</div><div class="a tk" style="left:528.2px;top:12px;width:1px;height:3px"></div><div class="a tk" style="left:537.7px;top:10px;width:1px;height:5px"></div><div class="a tk" style="left:547.1px;top:12px;width:1px;height:3px"></div><div class="a tk" style="left:556.6px;top:0;width:1px;height:15px"></div><div class="a rl" style="left:559.6px;top:1px">14</div><div class="a tk" style="left:566.0px;top:12px;width:1px;height:3px"></div><div class="a tk" style="left:575.5px;top:10px;width:1px;height:5px"></div><div class="a tk" style="left:584.9px;top:12px;width:1px;height:3px"></div><div class="a tk" style="left:594.4px;top:0;width:1px;height:15px"></div><div class="a rl" style="left:597.4px;top:1px">16</div><div class="a tk" style="left:603.9px;top:12px;width:1px;height:3px"></div><div class="a tk" style="left:613.3px;top:10px;width:1px;height:5px"></div><div class="a tk" style="left:622.8px;top:12px;width:1px;height:3px"></div><div class="a tk" style="left:632.2px;top:0;width:1px;height:15px"></div><div class="a rl" style="left:635.2px;top:1px">18</div><div class="a tk" style="left:641.7px;top:12px;width:1px;height:3px"></div><div class="a tk" style="left:651.1px;top:10px;width:1px;height:5px"></div><div class="a tk" style="left:660.6px;top:12px;width:1px;height:3px"></div><div class="a tk" style="left:670.0px;top:0;width:1px;height:15px"></div><div class="a rl" style="left:673.0px;top:1px">20</div><div class="a tk" style="left:679.5px;top:12px;width:1px;height:3px"></div><div class="a tk" style="left:688.9px;top:10px;width:1px;height:5px"></div><div class="a tk" style="left:698.4px;top:12px;width:1px;height:3px"></div><div class="a tk" style="left:707.8px;top:0;width:1px;height:15px"></div><div class="a rl" style="left:710.8px;top:1px">22</div><div class="a tk" style="left:717.2px;top:12px;width:1px;height:3px"></div><div class="a tk" style="left:726.7px;top:10px;width:1px;height:5px"></div><div class="a tk" style="left:736.1px;top:12px;width:1px;height:3px"></div><div class="a tk" style="left:745.6px;top:0;width:1px;height:15px"></div><div class="a rl" style="left:748.6px;top:1px">24</div><div class="a tk" style="left:755.0px;top:12px;width:1px;height:3px"></div><div class="a tk" style="left:764.5px;top:10px;width:1px;height:5px"></div><div class="a tk" style="left:773.9px;top:12px;width:1px;height:3px"></div><div class="a tk" style="left:783.4px;top:0;width:1px;height:15px"></div><div class="a rl" style="left:786.4px;top:1px">26</div><div class="a tk" style="left:792.9px;top:12px;width:1px;height:3px"></div><div class="a tk" style="left:802.3px;top:10px;width:1px;height:5px"></div><div class="a tk" style="left:811.8px;top:12px;width:1px;height:3px"></div><div class="a tk" style="left:821.2px;top:0;width:1px;height:15px"></div><div class="a rl" style="left:824.2px;top:1px">28</div><div class="a tk" style="left:830.6px;top:12px;width:1px;height:3px"></div><div class="a tk" style="left:840.1px;top:10px;width:1px;height:5px"></div><div class="a tk" style="left:849.5px;top:12px;width:1px;height:3px"></div><div class="a tk" style="left:859.0px;top:0;width:1px;height:15px"></div><div class="a rl" style="left:862.0px;top:1px">30</div><div class="a tk" style="left:868.5px;top:12px;width:1px;height:3px"></div><div class="a tk" style="left:877.9px;top:10px;width:1px;height:5px"></div><div class="a tk" style="left:887.4px;top:12px;width:1px;height:3px"></div><div class="a tk" style="left:896.8px;top:0;width:1px;height:15px"></div><div class="a rl" style="left:899.8px;top:1px">32</div><div class="a tk" style="left:906.2px;top:12px;width:1px;height:3px"></div><div class="a tk" style="left:915.7px;top:10px;width:1px;height:5px"></div><div class="a tk" style="left:925.1px;top:12px;width:1px;height:3px"></div><div class="a tk" style="left:934.6px;top:0;width:1px;height:15px"></div><div class="a rl" style="left:937.6px;top:1px">34</div><div class="a tk" style="left:944.0px;top:12px;width:1px;height:3px"></div><div class="a tk" style="left:953.5px;top:10px;width:1px;height:5px"></div><div class="a tk" style="left:962.9px;top:12px;width:1px;height:3px"></div><div class="a tk" style="left:972.4px;top:0;width:1px;height:15px"></div><div class="a rl" style="left:975.4px;top:1px">36</div><div class="a tk" style="left:981.9px;top:12px;width:1px;height:3px"></div><div class="a tk" style="left:991.3px;top:10px;width:1px;height:5px"></div><div class="a tk" style="left:1000.8px;top:12px;width:1px;height:3px"></div><div class="a tk" style="left:1010.2px;top:0;width:1px;height:15px"></div><div class="a rl" style="left:1013.2px;top:1px">38</div><div class="a tk" style="left:1019.6px;top:12px;width:1px;height:3px"></div><div class="a tk" style="left:1029.1px;top:10px;width:1px;height:5px"></div><div class="a tk" style="left:1038.5px;top:12px;width:1px;height:3px"></div><div class="a tk" style="left:1048.0px;top:0;width:1px;height:15px"></div><div class="a rl" style="left:1051.0px;top:1px">40</div><div class="a tk" style="left:1057.5px;top:12px;width:1px;height:3px"></div><div class="a tk" style="left:1066.9px;top:10px;width:1px;height:5px"></div><div class="a" style="left:1060px;top:0;width:22px;height:15px;background:linear-gradient(90deg,rgba(44,44,44,0),#404040)"></div></div><div class="a" style="left:56px;top:98px;width:1052px;height:1px;background:#5a5a5a"></div>
<div class="a" style="left:38px;top:98px;width:17px;height:613px;background:#2c2c2c;overflow:hidden"><div class="a tk" style="left:12px;top:0.3px;width:5px;height:1px"></div><div class="a tk" style="left:14px;top:9.8px;width:3px;height:1px"></div><div class="a tk" style="left:0;top:19.2px;width:17px;height:1px"></div><div class="a rl" style="left:1.5px;top:22.2px;width:10px;line-height:10px;text-align:center">2</div><div class="a tk" style="left:14px;top:28.7px;width:3px;height:1px"></div><div class="a tk" style="left:12px;top:38.1px;width:5px;height:1px"></div><div class="a tk" style="left:14px;top:47.5px;width:3px;height:1px"></div><div class="a tk" style="left:0;top:57.0px;width:17px;height:1px"></div><div class="a rl" style="left:1.5px;top:60.0px;width:10px;line-height:10px;text-align:center">0</div><div class="a tk" style="left:14px;top:66.5px;width:3px;height:1px"></div><div class="a tk" style="left:12px;top:75.9px;width:5px;height:1px"></div><div class="a tk" style="left:14px;top:85.3px;width:3px;height:1px"></div><div class="a tk" style="left:0;top:94.8px;width:17px;height:1px"></div><div class="a rl" style="left:1.5px;top:97.8px;width:10px;line-height:10px;text-align:center">2</div><div class="a tk" style="left:14px;top:104.3px;width:3px;height:1px"></div><div class="a tk" style="left:12px;top:113.7px;width:5px;height:1px"></div><div class="a tk" style="left:14px;top:123.2px;width:3px;height:1px"></div><div class="a tk" style="left:0;top:132.6px;width:17px;height:1px"></div><div class="a rl" style="left:1.5px;top:135.6px;width:10px;line-height:10px;text-align:center">4</div><div class="a tk" style="left:14px;top:142.0px;width:3px;height:1px"></div><div class="a tk" style="left:12px;top:151.5px;width:5px;height:1px"></div><div class="a tk" style="left:14px;top:160.9px;width:3px;height:1px"></div><div class="a tk" style="left:0;top:170.4px;width:17px;height:1px"></div><div class="a rl" style="left:1.5px;top:173.4px;width:10px;line-height:10px;text-align:center">6</div><div class="a tk" style="left:14px;top:179.8px;width:3px;height:1px"></div><div class="a tk" style="left:12px;top:189.3px;width:5px;height:1px"></div><div class="a tk" style="left:14px;top:198.7px;width:3px;height:1px"></div><div class="a tk" style="left:0;top:208.2px;width:17px;height:1px"></div><div class="a rl" style="left:1.5px;top:211.2px;width:10px;line-height:10px;text-align:center">8</div><div class="a tk" style="left:14px;top:217.6px;width:3px;height:1px"></div><div class="a tk" style="left:12px;top:227.1px;width:5px;height:1px"></div><div class="a tk" style="left:14px;top:236.5px;width:3px;height:1px"></div><div class="a tk" style="left:0;top:246.0px;width:17px;height:1px"></div><div class="a rl" style="left:1.5px;top:249.0px;width:10px;line-height:10px;text-align:center">1<br>0</div><div class="a tk" style="left:14px;top:255.4px;width:3px;height:1px"></div><div class="a tk" style="left:12px;top:264.9px;width:5px;height:1px"></div><div class="a tk" style="left:14px;top:274.4px;width:3px;height:1px"></div><div class="a tk" style="left:0;top:283.8px;width:17px;height:1px"></div><div class="a rl" style="left:1.5px;top:286.8px;width:10px;line-height:10px;text-align:center">1<br>2</div><div class="a tk" style="left:14px;top:293.2px;width:3px;height:1px"></div><div class="a tk" style="left:12px;top:302.7px;width:5px;height:1px"></div><div class="a tk" style="left:14px;top:312.1px;width:3px;height:1px"></div><div class="a tk" style="left:0;top:321.6px;width:17px;height:1px"></div><div class="a rl" style="left:1.5px;top:324.6px;width:10px;line-height:10px;text-align:center">1<br>4</div><div class="a tk" style="left:14px;top:331.0px;width:3px;height:1px"></div><div class="a tk" style="left:12px;top:340.5px;width:5px;height:1px"></div><div class="a tk" style="left:14px;top:349.9px;width:3px;height:1px"></div><div class="a tk" style="left:0;top:359.4px;width:17px;height:1px"></div><div class="a rl" style="left:1.5px;top:362.4px;width:10px;line-height:10px;text-align:center">1<br>6</div><div class="a tk" style="left:14px;top:368.8px;width:3px;height:1px"></div><div class="a tk" style="left:12px;top:378.3px;width:5px;height:1px"></div><div class="a tk" style="left:14px;top:387.8px;width:3px;height:1px"></div><div class="a tk" style="left:0;top:397.2px;width:17px;height:1px"></div><div class="a rl" style="left:1.5px;top:400.2px;width:10px;line-height:10px;text-align:center">1<br>8</div><div class="a tk" style="left:14px;top:406.6px;width:3px;height:1px"></div><div class="a tk" style="left:12px;top:416.1px;width:5px;height:1px"></div><div class="a tk" style="left:14px;top:425.6px;width:3px;height:1px"></div><div class="a tk" style="left:0;top:435.0px;width:17px;height:1px"></div><div class="a rl" style="left:1.5px;top:438.0px;width:10px;line-height:10px;text-align:center">2<br>0</div><div class="a tk" style="left:14px;top:444.4px;width:3px;height:1px"></div><div class="a tk" style="left:12px;top:453.9px;width:5px;height:1px"></div><div class="a tk" style="left:14px;top:463.4px;width:3px;height:1px"></div><div class="a tk" style="left:0;top:472.8px;width:17px;height:1px"></div><div class="a rl" style="left:1.5px;top:475.8px;width:10px;line-height:10px;text-align:center">2<br>2</div><div class="a tk" style="left:14px;top:482.2px;width:3px;height:1px"></div><div class="a tk" style="left:12px;top:491.7px;width:5px;height:1px"></div><div class="a tk" style="left:14px;top:501.1px;width:3px;height:1px"></div><div class="a tk" style="left:0;top:510.6px;width:17px;height:1px"></div><div class="a rl" style="left:1.5px;top:513.6px;width:10px;line-height:10px;text-align:center">2<br>4</div><div class="a tk" style="left:14px;top:520.0px;width:3px;height:1px"></div><div class="a tk" style="left:12px;top:529.5px;width:5px;height:1px"></div><div class="a tk" style="left:14px;top:538.9px;width:3px;height:1px"></div><div class="a tk" style="left:0;top:548.4px;width:17px;height:1px"></div><div class="a rl" style="left:1.5px;top:551.4px;width:10px;line-height:10px;text-align:center">2<br>6</div><div class="a tk" style="left:14px;top:557.9px;width:3px;height:1px"></div><div class="a tk" style="left:12px;top:567.3px;width:5px;height:1px"></div><div class="a tk" style="left:14px;top:576.8px;width:3px;height:1px"></div><div class="a tk" style="left:0;top:586.2px;width:17px;height:1px"></div><div class="a rl" style="left:1.5px;top:589.2px;width:10px;line-height:10px;text-align:center">2<br>8</div><div class="a tk" style="left:14px;top:595.6px;width:3px;height:1px"></div><div class="a tk" style="left:12px;top:605.1px;width:5px;height:1px"></div></div><div class="a" style="left:55px;top:98px;width:1px;height:613px;background:#5a5a5a"></div>
<div class="a" style="left:38px;top:711px;width:1082px;height:12px;background:linear-gradient(#3a3a3a,#474747)"></div>
<div class="a" style="left:38px;top:711px;width:49px;height:12px;background:#3c3c3c"></div>
<div class="a" style="left:42px;top:712px;font-size:12px;color:#dcdcdc;line-height:14px">66.67%</div>
<div class="a" style="left:87px;top:711px;width:23px;height:12px;background:#555"></div>
<svg class="ic" style="left:92px;top:712px" width="14" height="11"><circle cx="7" cy="7" r="5.5" fill="#9a9a9a"/><path d="M5 4h4l2 2v5h-6z" fill="#e8e8e8"/></svg>
<div class="a" style="left:110px;top:711px;width:171px;height:12px;background:#4a4a4a"></div>
<div class="a" style="left:149px;top:712px;font-size:12px;color:#dcdcdc;line-height:14px">文档:1.61M/3.71M</div>
<div class="a" style="left:281px;top:711px;width:12px;height:12px;background:#5e5e5e"></div>
<svg class="ic" style="left:284px;top:714px" width="7" height="9"><path d="M1 0L6 4.5L1 9Z" fill="#f0f0f0"/></svg>

<div class="a" style="left:947px;top:84px;width:1px;height:14px;background:repeating-linear-gradient(#e0e0e0 0 1px,transparent 1px 2px)"></div>
<div class="a" style="left:39px;top:481px;width:16px;height:1px;background:repeating-linear-gradient(90deg,#e0e0e0 0 1px,transparent 1px 2px)"></div>

<div class="a" style="left:993px;top:101px;width:4px;height:154px;background:rgba(0,0,0,0.08)"></div>
<div class="a" style="left:997px;top:100px;width:211px;height:154px;background:#535353;border:1px solid #2c2c2c">
  <div class="a" style="left:0;top:0;width:209px;height:13px;background:#3d3d3d"></div>
  <svg class="ic" style="left:182px;top:3px" width="8" height="7"><path d="M3.5 0.5L0 3.5L3.5 6.5Z M8 0.5L4.5 3.5L8 6.5Z" fill="#d8d8d8"/></svg>
  <svg class="ic" style="left:199px;top:3px" width="7" height="7"><path d="M1 1L6 6M6 1L1 6" stroke="#e8e8e8" stroke-width="1.5"/></svg>
  <div class="a" style="left:0;top:13px;width:209px;height:18px;background:#3c3c3c;border-bottom:1px solid #2e2e2e"></div>
  <div class="a" style="left:0;top:13px;width:62px;height:18px;background:#535353"></div>
  <div class="lbl" style="left:7px;top:14px;color:#dadada">历史记录</div>
  <svg class="ic" style="left:190px;top:17px" width="14" height="10"><path d="M0 3h5l-2.5 3z" fill="#e0e0e0"/><path d="M5 1.5h8M5 4h8M5 6.5h8M5 9h8" stroke="#e0e0e0" stroke-width="1"/></svg>
  <!-- scrollbar -->
  <div class="a" style="left:194px;top:31px;width:15px;height:96px;background:#434343;border-left:1px solid #3a3a3a"></div>
  <!-- row1 -->
  <svg class="ic" style="left:5px;top:43px" width="16" height="14"><path d="M3 12 Q6 12 9 8 L14 2 L13 1 L7 7 Q4 8 3 12Z" fill="#c8c8c8"/><path d="M2 3 Q6 1 11 2 M2 3 L3 6" stroke="#c8c8c8" stroke-width="1.4" fill="none"/><path d="M13 6v1M12 9v1M10 12v1" stroke="#c8c8c8"/></svg>
  <div class="a" style="left:24px;top:33px;width:32px;height:32px;background:linear-gradient(90deg,#b4aca8,#c2bab6 60%,#aaa29e);border:1px solid #111;overflow:hidden">
    <svg width="30" height="30" viewBox="330 155 500 500"><use href="#figg"/></svg>
  </div>
  <div class="lbl" style="left:62px;top:41px;color:#f4f4f4">卡其色.jpg</div>
  <div class="a" style="left:0;top:68px;width:194px;height:3px;background:#434343;border-top:1px solid #3a3a3a;border-bottom:1px solid #606060"></div>
  <!-- row2 -->
  <div class="a" style="left:5px;top:77px;width:12px;height:12px;border:1px solid #3a3a3a;background:#535353"></div>
  <svg class="ic" style="left:29px;top:74px" width="20" height="18" viewBox="21 36 20 18"><path d="M21 37.5 L27 39 M21 37.5 L23.5 48.5 L37 46.5 L37 44" fill="none" stroke="#cfcfcf" stroke-width="1.3"/><path d="M27 36.5 L33 36.5 Q37.5 37 37.5 41 Q37.5 45.5 33 45.5 L27 45.5 Z" fill="#cdcdcd"/><path d="M28 41 L34 41" stroke="#3a3a3a" stroke-width="1.4"/><path d="M28.5 38.5 L28.5 44" stroke="#555" stroke-width="1.2"/><circle cx="24" cy="48.5" r="1" fill="#cfcfcf"/><path d="M25 49 L24 53" stroke="#cfcfcf" stroke-width="1.3"/></svg>
  <div class="lbl" style="left:57px;top:74px;color:#f4f4f4">磁性套索</div>
  <!-- row3 -->
  <div class="a" style="left:0;top:94px;width:194px;height:22px;background:#586475"></div>
  <div class="a" style="left:5px;top:99px;width:12px;height:12px;border:1px solid #3a3a3a;background:#586475"></div>
  <svg class="ic" style="left:30px;top:97px" width="16" height="18"><path d="M1.5 1.5h10l3 3v12h-13z" fill="none" stroke="#cfcfcf" stroke-width="1.2"/><path d="M4 6h8M4 8.5h8M4 11h8M4 13.5h8" stroke="#cfcfcf" stroke-width="1"/></svg>
  <div class="lbl" style="left:57px;top:97px;color:#f4f4f4">通过拷贝的图层</div>
  <!-- footer -->
  <div class="a" style="left:0;top:127px;width:209px;height:17px;background:#535353;border-top:1px solid #3e3e3e"></div>
  <svg class="ic" style="left:106px;top:130px" width="16" height="13"><path d="M6 1h6l3 3v8H6z" fill="#c8c8c8"/><path d="M1 8h7M4.5 4.5v7" stroke="#c8c8c8" stroke-width="2.2"/></svg>
  <svg class="ic" style="left:139px;top:131px" width="14" height="11"><path d="M1 3h3l1-2h4l1 2h3v7H1z" fill="#c8c8c8"/><circle cx="7" cy="6.5" r="2.4" fill="#535353"/></svg>
  <svg class="ic" style="left:168px;top:130px" width="12" height="13"><path d="M1 2.5h10M4 2.5V1h4v1.5M2 4h8l-1 8H3z" fill="none" stroke="#c8c8c8" stroke-width="1.2"/><path d="M4.5 5.5v5M6 5.5v5M7.5 5.5v5" stroke="#c8c8c8" stroke-width="0.8"/></svg>
  <div class="a" style="left:197px;top:134px;width:10px;height:9px;background:radial-gradient(circle,#7a7a7a 0.6px,transparent 0.8px) 0 0/2px 2px;clip-path:polygon(100% 0,100% 100%,0 100%)"></div>
  <div class="a" style="left:0;top:144px;width:209px;height:8px;background:#4c4c4c;border-top:1px solid #393939"></div>
  <div class="a" style="left:95px;top:147px;width:18px;height:2px;background:repeating-linear-gradient(90deg,#2a2a2a 0 1px,transparent 1px 2px)"></div>
</div>

<div class="a" style="left:858px;top:700px;width:194px;height:23px;background:#fff;border:1px solid #2c5aa6;border-bottom:none"></div>
<svg class="a" style="left:858px;top:701px" width="194" height="22" viewBox="858 701 194 22">
 <circle cx="873" cy="714" r="10" fill="#2f74de"/>
 <path d="M866 721 Q865 716 868 714 Q867 708 873 706.5 Q879 708 878 714 Q881 716 880 721 Z" fill="#fff"/><circle cx="871" cy="711" r="1" fill="#2f74de"/><circle cx="875" cy="711" r="1" fill="#2f74de"/>
 <text x="890" y="720" font-size="16" font-weight="bold" fill="#2f74de" stroke="#2f74de" stroke-width="0.7">英</text>
 <path d="M925 707.5 Q931.5 712 928 718 Q923 722.5 915.5 718.5 Q921 718 923.5 714.5 Q925.5 711 925 707.5 Z" fill="#2f74de"/>
 <circle cx="941" cy="711" r="2" fill="#b8d0f4"/>
 <path d="M947 716 Q948 720 945 722" stroke="#b8d0f4" stroke-width="2" fill="none"/>
 <circle cx="963" cy="719" r="2.5" fill="none" stroke="#2f74de" stroke-width="1.8"/>
 <circle cx="972" cy="719" r="2.5" fill="none" stroke="#2f74de" stroke-width="1.8"/>
 <path d="M964 717 L972 708 M971 717 L963 708" stroke="#2f74de" stroke-width="1.8"/>
 <circle cx="974" cy="705" r="3" fill="#ee4030"/>
 <rect x="984" y="708" width="15" height="11" rx="1.5" fill="none" stroke="#2f74de" stroke-width="1.6"/>
 <path d="M987 711h1M990 711h1M993 711h1M996 711h1M987 714h1M990 714h1M993 714h1M996 714h1M988 717h8" stroke="#2f74de" stroke-width="1.3"/>
 <path d="M1008.5 708.5 L1011.5 707 Q1013.5 709 1015.5 707 L1018.5 708.5 L1021 713 L1018 714 L1018 721 L1009 721 L1009 714 L1006 713Z" fill="#2f74de"/>
 <circle cx="1036.5" cy="713.5" r="4.8" fill="none" stroke="#2f74de" stroke-width="3.2"/>
 <path d="M1036.5 706.5v2.5M1036.5 718v2.5M1029.5 713.5h2.5M1041 713.5h2.5M1031.5 708.5l1.8 1.8M1039.7 716.7l1.8 1.8M1041.5 708.5l-1.8 1.8M1033.3 716.7l-1.8 1.8" stroke="#2f74de" stroke-width="3"/>
</svg>
<div class="a" style="left:1190px;top:706px;width:50px;height:17px;background:#fff"></div>
<div class="a" style="left:1193px;top:708px;width:1px;height:15px;background:repeating-linear-gradient(#888 0 1px,transparent 1px 3px)"></div>
<div class="a" style="left:1202px;top:709px;width:16px;height:14px;background:#2f74de;border-radius:2px"></div>
<svg class="ic" style="left:1202px;top:709px" width="16" height="14"><path d="M3 13 Q3 5 8 3 Q13 5 13 13 L11 11 L9 13 L7 11 L5 13Z" fill="#fff"/></svg>
<div class="a" style="left:1226px;top:712px;width:6px;height:2px;background:#111"></div>
<svg class="ic" style="left:1225px;top:717px" width="8" height="6"><path d="M0 0h8L4 5z" fill="#111"/></svg>

<svg class="a" style="left:1070px;top:445px" width="62" height="65" viewBox="1070 445 62 65">
 <path d="M1077 460 L1110 457 L1108 451 L1128 460 L1108 469 L1110 463 Z" fill="#ee2a2a"/>
 <path d="M1088 497 L1110 494 L1108 488 L1126 497 L1108 506 L1110 500 Z" fill="#ee2a2a"/>
</svg>

</body></html>
